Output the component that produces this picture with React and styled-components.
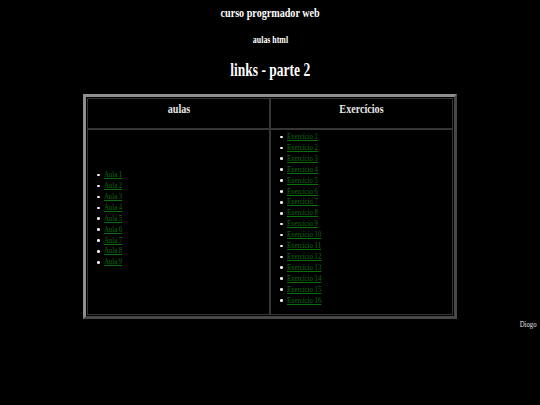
import React from "react";
import styled, { createGlobalStyle } from "styled-components";

const Global = createGlobalStyle`
  html, body {
    margin: 0;
    padding: 0;
    background: #000;
  }
  body {
    font-family: "Liberation Serif", "Times New Roman", serif;
    color: #fff;
  }
`;

const Page = styled.div`
  box-sizing: border-box;
  min-height: 405px;
  padding: 5.4px 3.4px 0;
`;

const Squash = styled.span`
  display: inline-block;
  white-space: nowrap;
  transform: scaleX(0.75);
  transform-origin: ${(p) => p.$origin || "center"};
`;

const Title = styled.h2`
  margin: 0;
  text-align: center;
  font-size: 13.5px;
  line-height: 15px;
  font-weight: bold;
`;

const Subtitle = styled.h3`
  margin: 13.4px 0 0;
  text-align: center;
  font-size: 10.5px;
  line-height: 12px;
  font-weight: bold;
`;

const MainTitle = styled.h1`
  margin: 14.2px 0 0;
  text-align: center;
  font-size: 18px;
  line-height: 20px;
  font-weight: bold;
`;

const Table = styled.table`
  width: 70%;
  margin: 14px auto 0;
  border-collapse: separate;
  border-spacing: 0;
  padding: 1px;
  border-width: 3px;
  border-style: solid;
  border-color: #8e8e8e #474747 #474747 #8e8e8e;
`;

const HeadCell = styled.th`
  width: 50%;
  padding: 2px 0 12px;
  border: 1px solid #363636;
  font-size: 13.5px;
  line-height: 15px;
  font-weight: bold;
  text-align: center;
  color: #e6e6e6;
`;

const BodyCell = styled.td`
  width: 50%;
  padding: 1px 0;
  border: 1px solid #363636;
  vertical-align: middle;
`;

const List = styled.ul`
  margin: 0 0 8px;
  padding-left: 16px;
  list-style: none;
`;

const Item = styled.li`
  font-size: 9px;
  line-height: 10.9px;
  color: #fff;

  &::before {
    content: "";
    display: inline-block;
    width: 2.6px;
    height: 2.6px;
    margin-left: -7px;
    margin-right: 4.4px;
    border-radius: 50%;
    background: #f2f2f2;
    vertical-align: middle;
  }
`;

const Link = styled.a`
  display: inline-block;
  white-space: nowrap;
  color: #0b700b;
  text-decoration: underline;
  transform: scaleX(0.75);
  transform-origin: left center;
`;

const Footer = styled.div`
  text-align: right;
  font-size: 9px;
  line-height: 10.9px;
  color: #e0e0e0;
`;

const aulas = Array.from({ length: 9 }, (_, i) => `Aula ${i + 1}`);
const exercicios = Array.from({ length: 16 }, (_, i) => `Exercício ${i + 1}`);

export default function App() {
  return (
    <>
      <Global />
      <Page>
        <Title>
          <Squash>curso progrmador web</Squash>
        </Title>
        <Subtitle>
          <Squash>aulas html</Squash>
        </Subtitle>
        <MainTitle>
          <Squash>links - parte 2</Squash>
        </MainTitle>
        <Table>
          <thead>
            <tr>
              <HeadCell>
                <Squash>aulas</Squash>
              </HeadCell>
              <HeadCell>
                <Squash>Exercícios</Squash>
              </HeadCell>
            </tr>
          </thead>
          <tbody>
            <tr>
              <BodyCell>
                <List>
                  {aulas.map((a) => (
                    <Item key={a}>
                      <Link href="#">{a}</Link>
                    </Item>
                  ))}
                </List>
              </BodyCell>
              <BodyCell>
                <List>
                  {exercicios.map((e) => (
                    <Item key={e}>
                      <Link href="#">{e}</Link>
                    </Item>
                  ))}
                </List>
              </BodyCell>
            </tr>
          </tbody>
        </Table>
        <Footer>
          <Squash $origin="right center">Diogo</Squash>
        </Footer>
      </Page>
    </>
  );
}
